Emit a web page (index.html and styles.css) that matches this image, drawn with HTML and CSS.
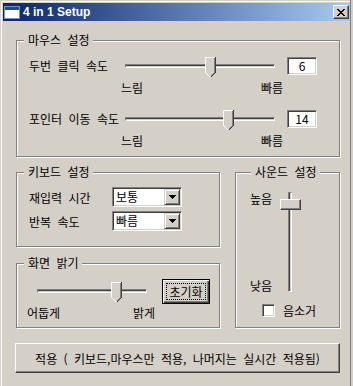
FILE: index.html
```html
<!DOCTYPE html>
<html lang="ko">
<head>
<meta charset="utf-8">
<title>4 in 1 Setup</title>
<link rel="stylesheet" href="styles.css">
</head>
<body>
<div class="window">
  <div class="titlebar">
    <svg class="app-icon" width="16" height="13" viewBox="0 0 16 13" shape-rendering="crispEdges">
      <rect x="0.5" y="0.5" width="15" height="12" fill="#ffffff" stroke="#8090b0"/>
      <rect x="1" y="1" width="14" height="3" fill="#1c4aa0"/>
    </svg>
    <span class="title">4 in 1 Setup</span>
    <button class="close" type="button" aria-label="닫기">
      <svg width="8" height="7" viewBox="0 0 8 7" shape-rendering="crispEdges">
        <path fill="#000" d="M0 0h2v1H0z M6 0h2v1H6z M1 1h2v1H1z M5 1h2v1H5z M2 2h4v1H2z M3 3h2v1H3z M2 4h4v1H2z M1 5h2v1H1z M5 5h2v1H5z M0 6h2v1H0z M6 6h2v1H6z"/>
      </svg>
    </button>
  </div>

  <div class="client">
    <fieldset class="group mouse">
      <legend>마우스 설정</legend>
      <div class="srow">
        <span class="slabel">두번 클릭 속도</span>
        <div class="hslider">
          <div class="track"></div>
          <svg class="thumb" style="left:80px" width="11" height="21" viewBox="0 0 11 21" shape-rendering="crispEdges">
            <polygon points="0,0 11,0 11,16 5.5,21 0,16" fill="#d4d0c8"/>
            <polyline points="0.5,15.5 0.5,0.5 10,0.5" fill="none" stroke="#fff"/>
            <polyline points="0.5,15.5 5,20" fill="none" stroke="#fff"/>
            <polyline points="9.5,1 9.5,15.5 5.5,19.5" fill="none" stroke="#808080"/>
            <polyline points="10.5,0 10.5,15.5 5.5,20.5" fill="none" stroke="#404040"/>
          </svg>
        </div>
        <div class="edit">6</div>
      </div>
      <div class="scale mscale"><span>느림</span><span>빠름</span></div>

      <div class="srow second">
        <span class="slabel">포인터 이동 속도</span>
        <div class="hslider">
          <div class="track"></div>
          <svg class="thumb" style="left:98px" width="11" height="21" viewBox="0 0 11 21" shape-rendering="crispEdges">
            <polygon points="0,0 11,0 11,16 5.5,21 0,16" fill="#d4d0c8"/>
            <polyline points="0.5,15.5 0.5,0.5 10,0.5" fill="none" stroke="#fff"/>
            <polyline points="0.5,15.5 5,20" fill="none" stroke="#fff"/>
            <polyline points="9.5,1 9.5,15.5 5.5,19.5" fill="none" stroke="#808080"/>
            <polyline points="10.5,0 10.5,15.5 5.5,20.5" fill="none" stroke="#404040"/>
          </svg>
        </div>
        <div class="edit">14</div>
      </div>
      <div class="scale mscale"><span>느림</span><span>빠름</span></div>
    </fieldset>

    <div class="lower">
      <div class="leftcol">
        <fieldset class="group kbd">
          <legend>키보드 설정</legend>
          <div class="krow">
            <span class="klabel">재입력 시간</span>
            <div class="combo">
              <span class="combo-text">보통</span>
              <span class="combo-btn">
                <svg width="7" height="4" viewBox="0 0 7 4" shape-rendering="crispEdges"><path d="M0 0h7v1H0z M1 1h5v1H1z M2 2h3v1H2z M3 3h1v1H3z" fill="#000"/></svg>
              </span>
            </div>
          </div>
          <div class="krow">
            <span class="klabel">반복 속도</span>
            <div class="combo">
              <span class="combo-text">빠름</span>
              <span class="combo-btn">
                <svg width="7" height="4" viewBox="0 0 7 4" shape-rendering="crispEdges"><path d="M0 0h7v1H0z M1 1h5v1H1z M2 2h3v1H2z M3 3h1v1H3z" fill="#000"/></svg>
              </span>
            </div>
          </div>
        </fieldset>

        <fieldset class="group bright">
          <legend>화면 밝기</legend>
          <div class="brow">
            <div class="hslider short">
              <div class="track"></div>
              <svg class="thumb" style="left:74px" width="11" height="21" viewBox="0 0 11 21" shape-rendering="crispEdges">
                <polygon points="0,0 11,0 11,16 5.5,21 0,16" fill="#d4d0c8"/>
                <polyline points="0.5,15.5 0.5,0.5 10,0.5" fill="none" stroke="#fff"/>
                <polyline points="0.5,15.5 5,20" fill="none" stroke="#fff"/>
                <polyline points="9.5,1 9.5,15.5 5.5,19.5" fill="none" stroke="#808080"/>
                <polyline points="10.5,0 10.5,15.5 5.5,20.5" fill="none" stroke="#404040"/>
              </svg>
            </div>
            <button class="btn default" type="button"><span class="focus">초기화</span></button>
          </div>
          <div class="scale bscale"><span>어둡게</span><span>밝게</span></div>
        </fieldset>
      </div>

      <fieldset class="group sound">
        <legend>사운드 설정</legend>
        <div class="vol">
          <div class="vlabels"><span>높음</span><span>낮음</span></div>
          <div class="vslider">
            <div class="vtrack"></div>
            <div class="vthumb" style="top:7px"></div>
          </div>
        </div>
        <label class="check">
          <span class="box"></span>
          <span>음소거</span>
        </label>
      </fieldset>
    </div>

    <button class="btn apply" type="button">적용 ( 키보드,마우스만 적용, 나머지는 실시간 적용됨)</button>
  </div>
</div>
</body>
</html>
```

FILE: styles.css
```css
* {
  box-sizing: border-box;
}

html,
body {
  margin: 0;
  padding: 0;
}

body {
  width: 353px;
  height: 386px;
  overflow: hidden;
  background: #d4d0c8;
  color: #000;
  font-family: "Noto Sans CJK KR", "Noto Sans", sans-serif;
  font-size: 12px;
  line-height: 17px;
  word-spacing: 3px;
}

.window {
  width: 351px;
  height: 386px;
  padding: 3px 0 0 3px;
  border-right: 1px solid #808080;
  box-shadow: inset 1px 1px 0 #d4d0c8, inset 2px 2px 0 #ffffff;
}

/* ---------- title bar ---------- */
.titlebar {
  display: flex;
  align-items: center;
  height: 18px;
  padding-left: 1px;
  background: linear-gradient(to right, #0a246a, #a6caf0);
}

.app-icon {
  display: block;
  flex: none;
}

.title {
  margin-left: 3px;
  color: #ffffff;
  font-family: "Liberation Sans", Arial, sans-serif;
  font-weight: bold;
  font-size: 12px;
  line-height: 14px;
  word-spacing: 0;
}

.close {
  display: flex;
  align-items: center;
  justify-content: center;
  width: 16px;
  height: 14px;
  margin-left: auto;
  margin-right: 1px;
  padding: 0 0 0 0;
  background: #d4d0c8;
  border: 1px solid;
  border-color: #ffffff #404040 #404040 #ffffff;
  box-shadow: inset -1px -1px 0 #808080;
}

.close svg {
  display: block;
}

/* ---------- client area ---------- */
.client {
  padding: 12px 0 0 13px;
}

.group {
  margin: 0;
  min-width: 0;
  border: 1px solid #808080;
  box-shadow: inset 1px 1px 0 #ffffff, 1px 1px 0 #ffffff;
}

.group legend {
  padding: 0 3px 0 4px;
  line-height: 14px;
  background: #d4d0c8;
}

/* mouse */
.mouse {
  width: 324px;
  padding: 10px 0 7px 12px;
}

.mouse legend {
  margin-left: -5px;
}

.srow {
  display: flex;
  align-items: flex-start;
  height: 21px;
}

.srow.second {
  margin-top: 14px;
}

.slabel {
  width: 96px;
  flex: none;
  white-space: nowrap;
}

.hslider {
  position: relative;
  flex: none;
  width: 150px;
  height: 21px;
}

.hslider.short {
  width: 110px;
}

.track {
  margin-top: 7px;
  height: 4px;
  border: 1px solid;
  border-color: #808080 #ffffff #ffffff #808080;
  background: #d4d0c8;
  box-shadow: inset 0 1px 0 #404040;
}

.thumb {
  position: absolute;
  top: 0;
  display: block;
}

.edit {
  display: flex;
  align-items: center;
  justify-content: center;
  flex: none;
  width: 30px;
  height: 18px;
  margin-left: 12px;
  background: #ffffff;
  border: 1px solid;
  border-color: #808080 #ffffff #ffffff #808080;
  box-shadow: inset 1px 1px 0 #404040, inset -1px -1px 0 #d4d0c8;
  line-height: 14px;
}

.scale {
  display: flex;
  justify-content: space-between;
}

.mscale {
  width: 162px;
  margin: 1px 0 0 92px;
}

/* lower area */
.lower {
  display: grid;
  grid-template-columns: 204px 105px;
  column-gap: 15px;
  margin-top: 8px;
}

.leftcol {
  display: flex;
  flex-direction: column;
}

.kbd {
  padding: 8px 0 15px 12px;
}

.kbd legend {
  margin-left: -5px;
}

.krow {
  display: flex;
  align-items: center;
  height: 20px;
}

.krow + .krow {
  margin-top: 4px;
}

.klabel {
  width: 83px;
  flex: none;
  white-space: nowrap;
}

.combo {
  display: flex;
  align-items: center;
  width: 70px;
  height: 20px;
  background: #ffffff;
  border: 1px solid;
  border-color: #808080 #ffffff #ffffff #808080;
  box-shadow: inset 1px 1px 0 #404040, inset -1px -1px 0 #d4d0c8;
  padding: 1px;
}

.combo-text {
  flex: 1;
  padding-left: 2px;
  line-height: 16px;
}

.combo-btn {
  display: flex;
  align-items: center;
  justify-content: center;
  width: 16px;
  height: 16px;
  background: #d4d0c8;
  border: 1px solid;
  border-color: #d4d0c8 #404040 #404040 #d4d0c8;
  box-shadow: inset 1px 1px 0 #ffffff, inset -1px -1px 0 #808080;
}

.combo-btn svg {
  display: block;
}

/* brightness */
.bright {
  margin-top: 9px;
  flex: 1;
  padding: 9px 0 6px 10px;
}

.bright legend {
  margin-left: -3px;
}

.brow {
  display: flex;
  align-items: flex-start;
  margin-left: 10px;
  height: 25px;
}

.brow .hslider {
  margin-top: 3px;
}

.bscale {
  width: 128px;
}

.btn {
  font-family: inherit;
  font-size: 12px;
  word-spacing: inherit;
  color: #000;
  background: #d4d0c8;
  padding: 0;
  margin: 0;
  border: 1px solid;
  border-color: #ffffff #404040 #404040 #ffffff;
  box-shadow: inset -1px -1px 0 #808080, inset 1px 1px 0 #d4d0c8;
}

.btn.default {
  width: 48px;
  height: 25px;
  margin-left: 15px;
  padding: 3px;
  border: 1px solid #000000;
  box-shadow: inset 1px 1px 0 #ffffff, inset -1px -1px 0 #404040, inset -2px -2px 0 #808080;
}

.focus {
  display: block;
  height: 17px;
  line-height: 15px;
  border: 1px dotted #000000;
}

/* sound */
.sound {
  padding: 11px 0 0 0;
}

.sound legend {
  margin-left: 15px;
}

.vol {
  display: flex;
  height: 104px;
  margin-left: 14px;
}

.vlabels {
  display: flex;
  flex-direction: column;
  justify-content: space-between;
  width: 30px;
}

.vslider {
  position: relative;
  width: 21px;
  height: 100px;
  margin-top: 2px;
}

.vtrack {
  width: 4px;
  height: 100px;
  margin-left: 8px;
  border: 1px solid;
  border-color: #808080 #ffffff #ffffff #808080;
  background: #d4d0c8;
  box-shadow: inset 1px 0 0 #404040;
}

.vthumb {
  position: absolute;
  left: 0;
  width: 21px;
  height: 11px;
  background: #d4d0c8;
  border: 1px solid;
  border-color: #ffffff #404040 #404040 #ffffff;
  box-shadow: inset -1px -1px 0 #808080;
}

.check {
  display: flex;
  align-items: center;
  margin: 8px 0 0 26px;
  gap: 8px;
}

.check .box {
  width: 13px;
  height: 13px;
  background: #ffffff;
  border: 1px solid;
  border-color: #808080 #ffffff #ffffff #808080;
  box-shadow: inset 1px 1px 0 #404040, inset -1px -1px 0 #d4d0c8;
}

/* apply */
.apply {
  display: block;
  width: 325px;
  height: 30px;
  margin: 15px 0 0 -1px;
  line-height: 17px;
}
```
